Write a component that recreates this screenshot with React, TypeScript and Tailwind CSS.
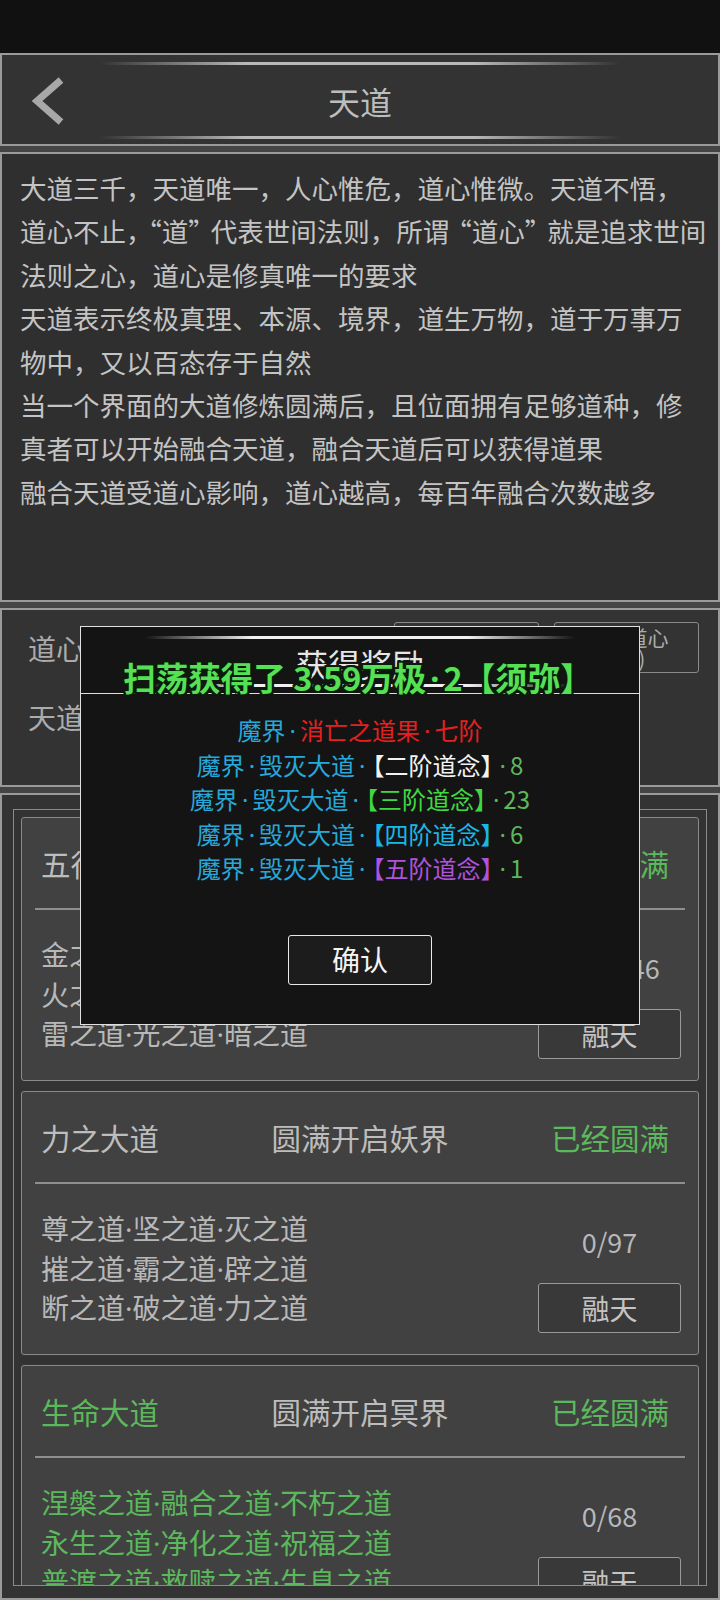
import React from "react";

const deco =
  "h-[3px] bg-[linear-gradient(90deg,rgba(180,180,180,0),#b8b8b8_28%,#b8b8b8_72%,rgba(180,180,180,0))]";
const decoWhite =
  "h-[3px] bg-[linear-gradient(90deg,rgba(255,255,255,0),#f0f0f0_25%,#f0f0f0_75%,rgba(255,255,255,0))]";

function Dot({ pad }: { pad?: boolean }) {
  return <span className={pad ? "font-['Noto_Sans',sans-serif] px-[4px]" : "font-['Noto_Sans',sans-serif]"}>·</span>;
}

function dotted(s: string, pad?: boolean) {
  const parts = s.split("·");
  const out: React.ReactNode[] = [];
  parts.forEach((p, i) => {
    if (i > 0) out.push(<Dot key={"d" + i} pad={pad} />);
    if (p) out.push(<React.Fragment key={"t" + i}>{p}</React.Fragment>);
  });
  return out;
}

function quoted(s: string) {
  const out: React.ReactNode[] = [];
  let buf = "";
  let k = 0;
  for (const ch of s) {
    if (ch === "“" || ch === "”") {
      if (buf) out.push(<React.Fragment key={"t" + k++}>{buf}</React.Fragment>);
      buf = "";
      out.push(
        <span key={"q" + k++} className={ch === "“" ? "ml-[-4px]" : "mr-[-4px]"}>
          {ch}
        </span>
      );
    } else buf += ch;
  }
  if (buf) out.push(<React.Fragment key={"t" + k++}>{buf}</React.Fragment>);
  return out;
}

const intro = [
  "大道三千，天道唯一，人心惟危，道心惟微。天道不悟，",
  "道心不止，“道”代表世间法则，所谓“道心”就是追求世间",
  "法则之心，道心是修真唯一的要求",
  "天道表示终极真理、本源、境界，道生万物，道于万事万",
  "物中，又以百态存于自然",
  "当一个界面的大道修炼圆满后，且位面拥有足够道种，修",
  "真者可以开始融合天道，融合天道后可以获得道果",
  "融合天道受道心影响，道心越高，每百年融合次数越多",
];

type Card = {
  title: string;
  titleGreen?: boolean;
  mid: string;
  lines: string[];
  linesGreen?: boolean;
  count: string;
};

const cards: Card[] = [
  {
    title: "五行大道",
    mid: "圆满开启仙界",
    lines: ["金之道·木之道·水之道", "火之道·土之道·风之道", "雷之道·光之道·暗之道"],
    count: "146/146",
  },
  {
    title: "力之大道",
    mid: "圆满开启妖界",
    lines: ["尊之道·坚之道·灭之道", "摧之道·霸之道·辟之道", "断之道·破之道·力之道"],
    count: "0/97",
  },
  {
    title: "生命大道",
    titleGreen: true,
    mid: "圆满开启冥界",
    lines: ["涅槃之道·融合之道·不朽之道", "永生之道·净化之道·祝福之道", "普渡之道·救赎之道·生息之道"],
    linesGreen: true,
    count: "0/68",
  },
];

function DaoCard({ c }: { c: Card }) {
  return (
    <div className="h-[264px] shrink-0 border border-[#8a8a8a] rounded-[3px] bg-[#414141] px-[13px]">
      <div className="h-[90px] grid grid-cols-[1fr_auto_1fr] items-center px-[6px] text-[29.5px] leading-[40px]">
        <span className={c.titleGreen ? "text-[#5cb85c]" : "text-[#bdbdbd]"}>{c.title}</span>
        <span className="text-[#bdbdbd]">{c.mid}</span>
        <span className="text-right pr-[10px] text-[#5cb85c]">已经圆满</span>
      </div>
      <div className="h-[2px] bg-[#8f8f8f]" />
      <div className="flex justify-between">
        <div
          className={
            "pl-[6px] pt-[25px] text-[28px] leading-[39.5px] whitespace-nowrap " +
            (c.linesGreen ? "text-[#5cb85c]" : "text-[#b8b8b8]")
          }
        >
          {c.lines.map((l) => (
            <div key={l} className="h-[39.5px]">
              {dotted(l)}
            </div>
          ))}
        </div>
        <div className="w-[143px] mr-[4px] flex flex-col items-center">
          <div className="mt-[38px] text-[27px] leading-[40px] text-[#b8b8b8]">{c.count}</div>
          <div className="mt-[21px] w-[143px] h-[50px] border border-[#9a9a9a] rounded-[3px] bg-[#393939] flex items-center justify-center text-[28px] text-[#c4c4c4]">
            融天
          </div>
        </div>
      </div>
    </div>
  );
}

function RewardLine({ bracket, color, num }: { bracket: string; color: string; num: string }) {
  return (
    <div className="h-[34.5px]">
      <span className="text-[#27a8da]">{dotted("魔界·毁灭大道·", true)}</span>
      <span className={color + " ml-[3px]"}>{bracket}</span>
      <span className="text-[#5cb85c] ml-[3px]">{dotted("·" + num, true)}</span>
    </div>
  );
}

export default function App() {
  return (
    <div className="relative w-[720px] h-[1600px] overflow-hidden bg-[#111] font-['Noto_Sans_CJK_SC','Noto_Sans',sans-serif]">
      <div className="h-[53px]" />
      <div className="flex flex-col gap-[6px] bg-[#444] h-[1547px]">
        {/* header */}
        <div className="h-[93px] shrink-0 border-2 border-[#9a9a9a] bg-[#333] pt-[7px] flex flex-col items-center">
          <div className={deco + " w-[520px]"} />
          <div className="h-[71px] w-full grid grid-cols-[1fr_auto_1fr] items-center">
            <div className="pl-[22px] flex items-center">
              <svg width="44" height="52" viewBox="0 0 44 52">
                <path d="M37 5 L13 26 L37 47" fill="none" stroke="#a8a8a8" strokeWidth="7" strokeLinejoin="miter" />
              </svg>
            </div>
            <div className="text-[32px] leading-[40px] text-[#bdbdbd]">天道</div>
            <div />
          </div>
          <div className={deco + " w-[520px]"} />
        </div>

        {/* intro text */}
        <div className="h-[450px] shrink-0 border-2 border-[#9a9a9a] bg-[#2f2f2f] pl-[18px] pt-[12px] text-[26.5px] leading-[43.4px] text-[#c4c4c4]">
          {intro.map((l) => (
            <div key={l} className="whitespace-nowrap h-[43.4px]">
              {quoted(l)}
            </div>
          ))}
        </div>

        {/* dao heart */}
        <div className="h-[179px] shrink-0 border-2 border-[#9a9a9a] bg-[#333] pl-[26px] pr-[19px] pt-[12px]">
          <div className="flex items-center justify-between h-[51px]">
            <div className="text-[28px] leading-[40px] text-[#ababab]">道心：3512</div>
            <div className="flex gap-[15px]">
              <div className="w-[145px] h-[51px] border border-[#8a8a8a] rounded-[3px] flex flex-col items-center justify-center text-[21px] leading-[21px] text-[#ababab]">
                <span>领悟道心</span>
                <span>(0/5)</span>
              </div>
              <div className="w-[145px] h-[51px] border border-[#8a8a8a] rounded-[3px] flex flex-col items-center justify-center text-[21px] leading-[21px] text-[#ababab]">
                <span>凝聚道心</span>
                <span>(10)</span>
              </div>
            </div>
          </div>
          <div className="mt-[24px] text-[28px] leading-[40px] text-[#ababab]">天道：魔界</div>
        </div>

        {/* list */}
        <div className="flex-1 border-2 border-[#9a9a9a] bg-[#333] pl-[11px] pt-[14px]">
          <div className="w-[694px] h-[777px] border border-[#8a8a8a] overflow-hidden px-[7px] pt-[7px] flex flex-col gap-[10px]">
            {cards.map((c) => (
              <DaoCard key={c.title} c={c} />
            ))}
          </div>
        </div>
      </div>

      {/* reward modal */}
      <div className="absolute left-[80px] top-[626px] w-[560px] h-[399px] border border-[#e0e0e0] bg-[#141414] flex flex-col">
        <div className="h-[67px] shrink-0 border-b border-[#e0e0e0] flex flex-col items-center pt-[9px] overflow-hidden">
          <div className={decoWhite + " w-[430px]"} />
          <div className="mt-[4px] text-[32px] leading-[40px] text-[#e6e6e6]">获得奖励</div>
        </div>
        <div className="pt-[19px] flex flex-col items-center text-[24px] leading-[34.5px] whitespace-nowrap">
          <div className="h-[34.5px]">
            <span className="text-[#27a8da]">{dotted("魔界·", true)}</span>
            <span className="text-[#e42020]">{dotted("消亡之道果·七阶", true)}</span>
          </div>
          <RewardLine bracket="【二阶道念】" color="text-[#f2f2f2]" num="8" />
          <RewardLine bracket="【三阶道念】" color="text-[#40d840]" num="23" />
          <RewardLine bracket="【四阶道念】" color="text-[#19b8e8]" num="6" />
          <RewardLine bracket="【五阶道念】" color="text-[#b052dc]" num="1" />
          <div className="mt-[49px] w-[144px] h-[50px] border-[1.5px] border-[#e8e8e8] rounded-[3px] bg-[#1c1c1c] flex items-center justify-center text-[28px] text-[#f4f4f4]">
            确认
          </div>
        </div>
      </div>

      {/* lower deco line of modal header, behind toast */}
      <div className="absolute left-[80px] top-[684px] w-[560px] flex justify-center">
        <div className={decoWhite + " w-[430px]"} />
      </div>

      {/* toast */}
      <div className="absolute left-0 top-[656px] w-[716px] h-[42px] text-center text-[32.5px] font-bold leading-[42px] text-[#55e055] whitespace-nowrap [text-shadow:-2px_-2px_0_#0c1a0c,2px_-2px_0_#0c1a0c,-2px_2px_0_#0c1a0c,2px_2px_0_#0c1a0c,0_2px_0_#0c1a0c,0_-2px_0_#0c1a0c,2px_0_0_#0c1a0c,-2px_0_0_#0c1a0c]">
        扫荡获得了 3.59万极{dotted("·", true)}2【须弥】
      </div>
    </div>
  );
}
